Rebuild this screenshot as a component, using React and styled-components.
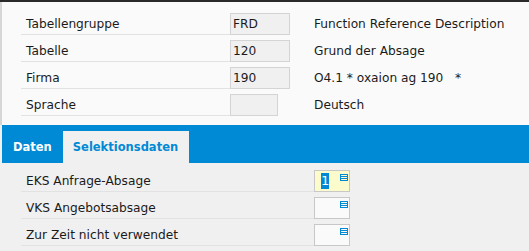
import React from "react";
import styled, { createGlobalStyle } from "styled-components";

const GlobalStyle = createGlobalStyle`
  body {
    margin: 0;
    background: #fafafa;
    font-family: "DejaVu Sans", Verdana, sans-serif;
    font-size: 12.2px;
    color: #1a1a1a;
  }
`

const Page = styled.div`
  width: 529px;
  height: 251px;
  overflow: hidden;
  border-top: 2px solid #2a2a2a;
  box-sizing: border-box;
  background: #f0f0f0;
`

const Header = styled.div`
  background: #fafafa;
  border-left: 2px solid #d6d6d6;
  padding: 6px 0 9px 19px;
`

const HeaderGrid = styled.div`
  display: grid;
  grid-template-columns: 209px 84px 1fr;
`

const Label = styled.div`
  height: 24px;
  border-bottom: 1px solid #e2e2e2;
  display: flex;
  align-items: flex-end;
  padding: 0 0 2px 5px;
  line-height: 15px;
`

const FieldCell = styled.div`
  display: flex;
  align-items: flex-end;
`

const ReadField = styled.div`
  width: ${p => p.$width}px;
  height: 22px;
  box-sizing: border-box;
  background: #f0f0f0;
  border: 1px solid #d4d4d4;
  padding: 0 2px;
  line-height: 20px;
`

const Description = styled.div`
  display: flex;
  align-items: flex-end;
  padding-bottom: 3px;
  line-height: 15px;
  white-space: pre;
`

const TabBar = styled.div`
  display: flex;
  align-items: flex-end;
  height: 38px;
  margin-left: 2px;
  padding-left: 1px;
  background: #0089d5;
`

const Tab = styled.div`
  height: 32px;
  display: flex;
  align-items: center;
  padding: 0 11px 0 10px;
  font-weight: bold;
  font-size: 11.5px;
  color: ${p => (p.$active ? "#0089d5" : "#ffffff")};
  background: ${p => (p.$active ? "#f0f0f0" : "transparent")};
`

const Body = styled.div`
  padding: 2px 0 0 21px;
`

const BodyGrid = styled.div`
  display: grid;
  grid-template-columns: 293px 1fr;
`

const SelectBox = styled.div`
  width: 36px;
  height: 22px;
  box-sizing: border-box;
  border: 1px solid #c8c8c8;
  background: ${p => (p.$focused ? "#fbfbcc" : "#fafafa")};
  display: flex;
  justify-content: space-between;
  align-items: flex-start;
  padding: 2px 1px 0 6px;
`

const Selected = styled.span`
  display: inline-block;
  width: 8px;
  height: 16px;
  background: #0089d5;
  color: #ffffff;
  font-size: 13px;
  line-height: 16px;
  text-align: center;
`

const ListIcon = styled.svg`
  margin-top: 1px;
  margin-left: auto;
  flex: none;
`

const MenuIcon = () => (
  <ListIcon width="8" height="7" viewBox="0 0 8 7">
    <rect x="0" y="0" width="8" height="1" fill="#0089d5" />
    <rect x="0" y="2" width="8" height="1" fill="#0089d5" />
    <rect x="0" y="4" width="8" height="1" fill="#0089d5" />
    <rect x="0" y="6" width="8" height="1" fill="#0089d5" />
    <rect x="0" y="0" width="1" height="7" fill="#0089d5" />
    <rect x="7" y="0" width="1" height="7" fill="#0089d5" />
  </ListIcon>
)

const headerRows = [
  { label: "Tabellengruppe", value: "FRD", width: 60, desc: "Function Reference Description" },
  { label: "Tabelle", value: "120", width: 60, desc: "Grund der Absage" },
  { label: "Firma", value: "190", width: 60, desc: "O4.1 * oxaion ag 190   *" },
  { label: "Sprache", value: "", width: 48, desc: "Deutsch" },
]

const selectRows = [
  { label: "EKS Anfrage-Absage", value: "1" },
  { label: "VKS Angebotsabsage", value: "" },
  { label: "Zur Zeit nicht verwendet", value: "" },
]

export default function App() {
  return <Page>
    <GlobalStyle />
    <Header>
      <HeaderGrid>
        {headerRows.map(r => <React.Fragment key={r.label}>
          <Label>{r.label}</Label>
          <FieldCell><ReadField $width={r.width}>{r.value}</ReadField></FieldCell>
          <Description>{r.desc}</Description>
        </React.Fragment>)}
      </HeaderGrid>
    </Header>
    <TabBar>
      <Tab>Daten</Tab>
      <Tab $active>Selektionsdaten</Tab>
    </TabBar>
    <Body>
      <BodyGrid>
        {selectRows.map(r => <React.Fragment key={r.label}>
          <Label>{r.label}</Label>
          <FieldCell>
            <SelectBox $focused={!!r.value}>
              {r.value && <Selected>{r.value}</Selected>}
              <MenuIcon />
            </SelectBox>
          </FieldCell>
        </React.Fragment>)}
      </BodyGrid>
    </Body>
  </Page>
}
